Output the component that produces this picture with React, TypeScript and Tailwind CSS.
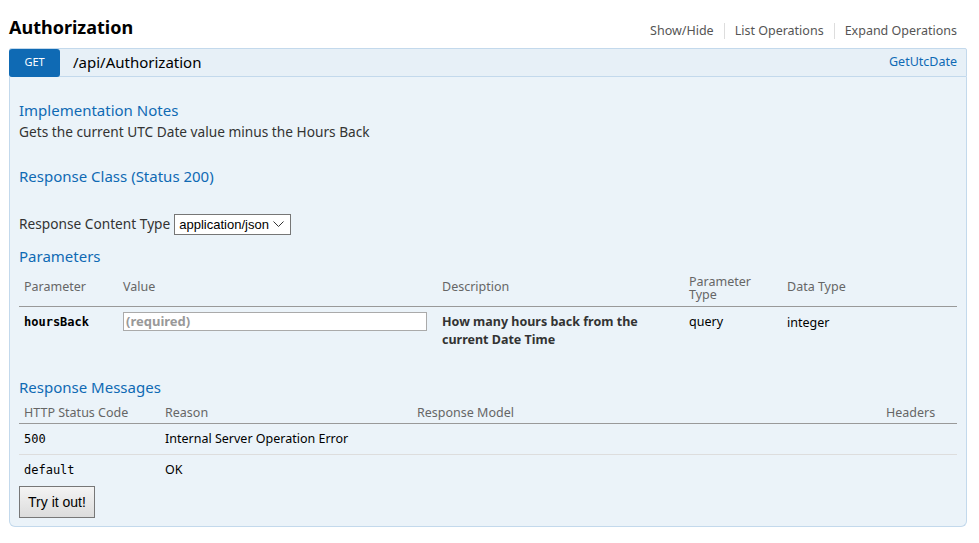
import React from "react";

const sans = "font-['Noto_Sans','Open_Sans',sans-serif]";
const mono = "font-['DejaVu_Sans_Mono','Liberation_Mono',monospace]";

const links = ["Show/Hide", "List Operations", "Expand Operations"];

export default function App() {
  return (
    <div className={`min-h-screen bg-white pl-[9px] pr-[12px] pt-[14px] text-[#333] ${sans}`}>
      {/* Resource title */}
      <div className="flex h-[34px] items-start justify-between">
        <h2 className="text-[18px] font-bold leading-[26px] text-black">Authorization</h2>
        <ul className="mt-[9px] flex items-center text-[12.5px] text-[#555]">
          {links.map((l, i) => (
            <li
              key={l}
              className={
                i === links.length - 1
                  ? "pl-[10px] pr-[10px] leading-[16px]"
                  : "border-r border-[#ddd] px-[10px] leading-[16px]"
              }
            >
              {l}
            </li>
          ))}
        </ul>
      </div>

      {/* Operation */}
      <div className="rounded-b-[6px]">
        <div className="flex h-[29px] items-center justify-between rounded-t-[2px] border border-[#c3d9ec] bg-[#e7f0f7] pr-[9px]">
          <div className="flex h-full items-center">
            <span className="-ml-px flex h-[28px] w-[51px] items-center justify-center rounded-[3px] bg-[#0f6ab4] text-[11px] text-white">
              GET
            </span>
            <span className="ml-[13px] text-[15px] text-black">/api/Authorization</span>
          </div>
          <span className="text-[12.5px] text-[#0f6ab4]">GetUtcDate</span>
        </div>

        <div className="rounded-b-[6px] border border-t-0 border-[#c3d9ec] bg-[#ebf3f9] px-[9px] pb-[8px] pt-[22px]">
          <h4 className="text-[15px] leading-[22px] text-[#0f6ab4]">Implementation Notes</h4>
          <p className="mt-[1px] text-[13.7px] leading-[20px]">Gets the current UTC Date value minus the Hours Back</p>

          <h4 className="mt-[23px] text-[15px] leading-[22px] text-[#0f6ab4]">Response Class (Status 200)</h4>

          <div className="mt-[27px] flex items-center text-[13.7px]">
            <span>Response Content Type</span>
            <span className="ml-[4px] flex h-[21px] w-[117px] items-center justify-between border border-[#767676] bg-white pl-[4px] pr-[6px] font-['Liberation_Sans',Arial,sans-serif] text-[13px] text-black">
              application/json
              <svg width="11" height="7" viewBox="0 0 11 7" fill="none" stroke="#333" strokeWidth="1">
                <path d="M0.5 0.5 L5.5 5.5 L10.5 0.5" />
              </svg>
            </span>
          </div>

          <h4 className="mt-[10px] text-[15px] leading-[22px] text-[#0f6ab4]">Parameters</h4>

          <table className="mt-[8px] w-full border-collapse text-[12.5px]">
            <thead>
              <tr className="border-b border-[#999] text-left align-bottom text-[#666]">
                <th className="w-[100px] pb-[11px] pl-[5px] font-normal leading-[16px]">Parameter</th>
                <th className="w-[319px] pb-[11px] pl-[4px] font-normal leading-[16px]">Value</th>
                <th className="w-[247px] pb-[11px] pl-[4px] font-normal leading-[16px]">Description</th>
                <th className="w-[98px] pb-[5px] pl-[4px] font-normal leading-[13px]">
                  Parameter
                  <br />
                  Type
                </th>
                <th className="pb-[11px] pl-[4px] font-normal leading-[16px]">Data Type</th>
              </tr>
            </thead>
            <tbody>
              <tr className="align-top">
                <td className={`pl-[5px] pt-[6px] text-[12px] font-bold text-black ${mono}`}>hoursBack</td>
                <td className="pl-[4px] pt-[5px]">
                  <div className="flex h-[19px] w-[304px] items-center border border-[#aaa] bg-white pl-[2px] text-[13px] font-bold text-[#999]">
                    (required)
                  </div>
                </td>
                <td className="pb-[10px] pl-[4px] pt-[6px] font-bold leading-[18px] text-[#333]">
                  How many hours back from the
                  <br />
                  current Date Time
                </td>
                <td className="pl-[4px] pt-[6px] leading-[18px] text-black">query</td>
                <td className="pl-[4px] pt-[7px] leading-[18px] text-black">integer</td>
              </tr>
            </tbody>
          </table>

          <h4 className="mt-[17px] text-[15px] leading-[22px] text-[#0f6ab4]">Response Messages</h4>

          <table className="mt-[6px] w-full border-collapse text-[12.5px]">
            <thead>
              <tr className="border-b border-[#999] text-left text-[#666]">
                <th className="w-[141px] pb-[1px] pl-[5px] font-normal leading-[18px]">HTTP Status Code</th>
                <th className="w-[252px] pb-[1px] pl-[5px] font-normal leading-[18px]">Reason</th>
                <th className="pb-[1px] pl-[5px] font-normal leading-[18px]">Response Model</th>
                <th className="w-[76px] pb-[1px] pl-[5px] font-normal leading-[18px]">Headers</th>
              </tr>
            </thead>
            <tbody className="text-black">
              <tr className="border-b border-[#ddd]">
                <td className={`pb-[6px] pl-[5px] pt-[6px] text-[12px] leading-[18px] ${mono}`}>500</td>
                <td className="pb-[6px] pl-[5px] pt-[6px] leading-[18px]">Internal Server Operation Error</td>
                <td />
                <td />
              </tr>
              <tr>
                <td className={`pb-[7px] pl-[5px] pt-[6px] text-[12px] leading-[18px] ${mono}`}>default</td>
                <td className="pb-[7px] pl-[5px] pt-[6px] leading-[18px]">OK</td>
                <td />
                <td />
              </tr>
            </tbody>
          </table>

          <button className="block h-[32px] w-[76px] border border-[#777] bg-gradient-to-b from-[#f4f4f4] to-[#dcdcdc] font-['Liberation_Sans',Arial,sans-serif] text-[14px] text-black">
            Try it out!
          </button>
        </div>
      </div>
    </div>
  );
}
